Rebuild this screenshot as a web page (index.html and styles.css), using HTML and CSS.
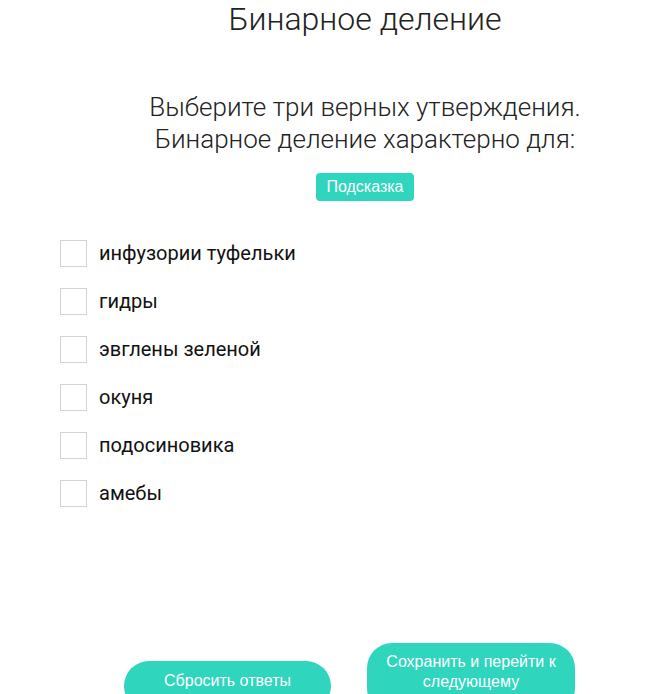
FILE: index.html
```html
<!DOCTYPE html>
<html lang="ru">
<head>
  <meta charset="UTF-8" />
  <title>Бинарное деление</title>
  <link rel="stylesheet" href="styles.css">
</head>
<body>
  <div class="page">
    <header class="head">
      <h1 class="title">Бинарное деление</h1>
      <p class="question">Выберите три верных утверждения.<br>Бинарное деление характерно для:</p>
      <button class="hint">Подсказка</button>
    </header>
    <ul class="answers">
      <li class="answer"><span class="box"></span><span>инфузории туфельки</span></li>
      <li class="answer"><span class="box"></span><span>гидры</span></li>
      <li class="answer"><span class="box"></span><span>эвглены зеленой</span></li>
      <li class="answer"><span class="box"></span><span>окуня</span></li>
      <li class="answer"><span class="box"></span><span>подосиновика</span></li>
      <li class="answer"><span class="box"></span><span>амебы</span></li>
    </ul>
    <div class="actions">
      <button class="btn btn-reset">Сбросить ответы</button>
      <button class="btn btn-next">Сохранить и перейти к следующему</button>
    </div>
  </div>
</body>
</html>
```

FILE: styles.css
```css
body { margin: 0; background: #fff; font-family: Roboto, Arial, sans-serif; color: #222; overflow: hidden; }
.page { width: 658px; height: 694px; }
.head { padding-left: 72px; text-align: center; }
.title { margin: 0; font-size: 32px; font-weight: 300; line-height: 38px; color: #222; }
.question { margin: 53px 0 0 0; font-size: 26px; font-weight: 300; line-height: 32px; color: #222; }
.hint { display: block; margin: 18px auto 0 auto; box-sizing: border-box; background: #2fd5bd; color: #fff; border: none; border-radius: 4px; font-family: "Liberation Sans", Arial, sans-serif; font-size: 16px; padding: 0; height: 28px; width: 98px; }
.answers { list-style: none; margin: 28px 0 0 0; padding: 0 0 0 60px; }
.answer { display: flex; align-items: center; height: 48px; font-size: 20px; color: #111; }
.box { width: 25px; height: 25px; border: 1px solid #d3d3d3; margin-right: 12px; }
.actions { display: flex; align-items: flex-start; gap: 36px; margin: 126px 0 0 124px; }
.btn { display: block; box-sizing: border-box; background: #2fd5bd; color: #fff; border: none; border-radius: 25px; font-family: "Liberation Sans", Arial, sans-serif; font-size: 16px; line-height: 20px; cursor: pointer; }
.btn-reset { width: 207px; margin-top: 18px; padding: 10px 0 20px 0; }
.btn-next { width: 208px; padding: 9px 18px 21px 18px; }
```
